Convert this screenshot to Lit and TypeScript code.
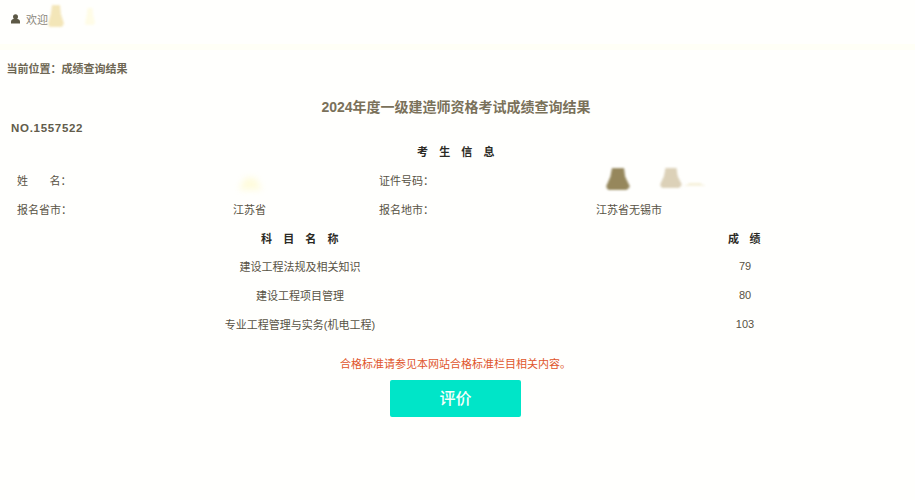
import { LitElement, html, css } from "lit";
import { customElement } from "lit/decorators.js";

const subjects = [
  ["建设工程法规及相关知识", "79"],
  ["建设工程项目管理", "80"],
  ["专业工程管理与实务(机电工程)", "103"],
];

@customElement("app-root")
export class AppRoot extends LitElement {
  static styles = css`
    :host {
      display: block;
      position: relative;
      width: 915px;
      height: 500px;
      overflow: hidden;
      background: #fffffd;
      color: #575244;
      font-family: "Liberation Sans", "Noto Sans CJK SC", sans-serif;
      font-size: 11px;
    }
    .top {
      height: 44px;
      display: flex;
      align-items: center;
      gap: 6px;
      padding: 0 0 6px 11px;
      box-sizing: border-box;
      color: #8a867a;
    }
    .top svg { width: 9px; height: 10px; }
    .band { height: 6px; background: #fffff6; }
    .crumb {
      margin: 11px 0 0 6.5px;
      height: 16px;
      line-height: 16px;
      font-weight: 700;
      color: #6e6753;
    }
    h1 {
      margin: 20px 3px 0 0;
      height: 20px;
      line-height: 20px;
      font-size: 14px;
      font-weight: 700;
      text-align: center;
      color: #7a715a;
    }
    .no {
      margin: 4px 0 0 11px;
      height: 14px;
      line-height: 14px;
      font-size: 11.5px;
      font-weight: 700;
      letter-spacing: 0.7px;
      color: #625c4b;
    }
    .head {
      height: 26px;
      line-height: 26px;
      margin: 4px 3px 0 0;
      text-align: center;
      font-weight: 700;
      letter-spacing: 0.5px;
      color: #2b2a24;
    }
    .info {
      display: grid;
      grid-template-columns: 216px 146px 217px 1fr;
      padding-left: 17px;
      grid-auto-rows: 29px;
      align-items: center;
    }
    .subjects {
      display: grid;
      grid-template-columns: 600px 290px;
      grid-auto-rows: 28.7px;
      align-items: center;
      text-align: center;
      margin-top: 0.4px;
    }
    .subjects .th { font-weight: 700; color: #2b2a24; letter-spacing: 0.5px; }
    .subjects .th.score { letter-spacing: 1.5px; }
    .notice {
      margin: 18px 4px 0 0;
      height: 16px;
      line-height: 16px;
      text-align: center;
      color: #e0552b;
    }
    .actions { display: flex; justify-content: center; margin-top: 8px; padding-right: 4px; }
    button {
      width: 131px;
      height: 37px;
      padding: 0 0 3px;
      border: none;
      border-radius: 2px;
      background: #00e5c8;
      color: #f6fffb;
      font: 500 16px "Liberation Sans", "Noto Sans CJK SC", sans-serif;
    }
    .smudge { position: absolute; filter: blur(1.2px); }
    .smudge::before {
      content: "";
      display: block;
      width: 100%;
      height: 100%;
      background-color: var(--tone);
      background-image: repeating-linear-gradient(0deg, rgba(255,255,255,0.3) 0 1px, rgba(255,255,255,0) 1px 3px);
      clip-path: polygon(25% 0, 75% 0, 80% 40%, 100% 85%, 85% 100%, 10% 100%, 0 85%, 18% 40%);
    }
    .s1 { left: 48px; top: 5px; width: 16px; height: 22px; --tone: #f2e3b0; }
    .s2 { left: 85px; top: 8px; width: 10px; height: 17px; --tone: #fffce4; }
    .s3 { left: 239px; top: 178px; width: 23px; height: 12px; --tone: #fffbd8; filter: blur(3px); }
    .s4 { left: 606px; top: 168px; width: 24px; height: 22px; --tone: #8a7a4a; }
    .s5 { left: 660px; top: 168px; width: 22px; height: 20px; --tone: #d8ccb0; }
    .s6 { left: 684px; top: 183px; width: 22px; height: 3px; --tone: #f5f0d8; }
  `;

  render() {
    return html`
      <div class="top">
        <svg viewBox="0 0 18 20" aria-hidden="true">
          <circle cx="9" cy="5.5" r="5" fill="#5c5845"></circle>
          <path d="M0 19v-4c0-3 3-5 5-5h8c2 0 5 2 5 5v4z" fill="#5c5845"></path>
        </svg>
        <span>欢迎</span>
      </div>
      <div class="band"></div>
      <div class="crumb">当前位置：成绩查询结果</div>
      <h1>2024年度一级建造师资格考试成绩查询结果</h1>
      <div class="no">NO.1557522</div>
      <div class="head">考&nbsp;&nbsp;&nbsp;生&nbsp;&nbsp;&nbsp;信&nbsp;&nbsp;&nbsp;息</div>
      <div class="info">
        <div>姓&nbsp;&nbsp;&nbsp;&nbsp;&nbsp;&nbsp;&nbsp;名：</div><div></div>
        <div>证件号码：</div><div></div>
        <div>报名省市：</div><div>江苏省</div>
        <div>报名地市：</div><div>江苏省无锡市</div>
      </div>
      <div class="subjects">
        <div class="th">科&nbsp;&nbsp;&nbsp;目&nbsp;&nbsp;&nbsp;名&nbsp;&nbsp;&nbsp;称</div>
        <div class="th score">成&nbsp;&nbsp;绩</div>
        ${subjects.map(([n, s]) => html`<div>${n}</div><div>${s}</div>`)}
      </div>
      <div class="notice">合格标准请参见本网站合格标准栏目相关内容。</div>
      <div class="actions"><button>评价</button></div>
      <i class="smudge s1"></i><i class="smudge s2"></i><i class="smudge s3"></i>
      <i class="smudge s4"></i><i class="smudge s5"></i><i class="smudge s6"></i>
    `;
  }
}
